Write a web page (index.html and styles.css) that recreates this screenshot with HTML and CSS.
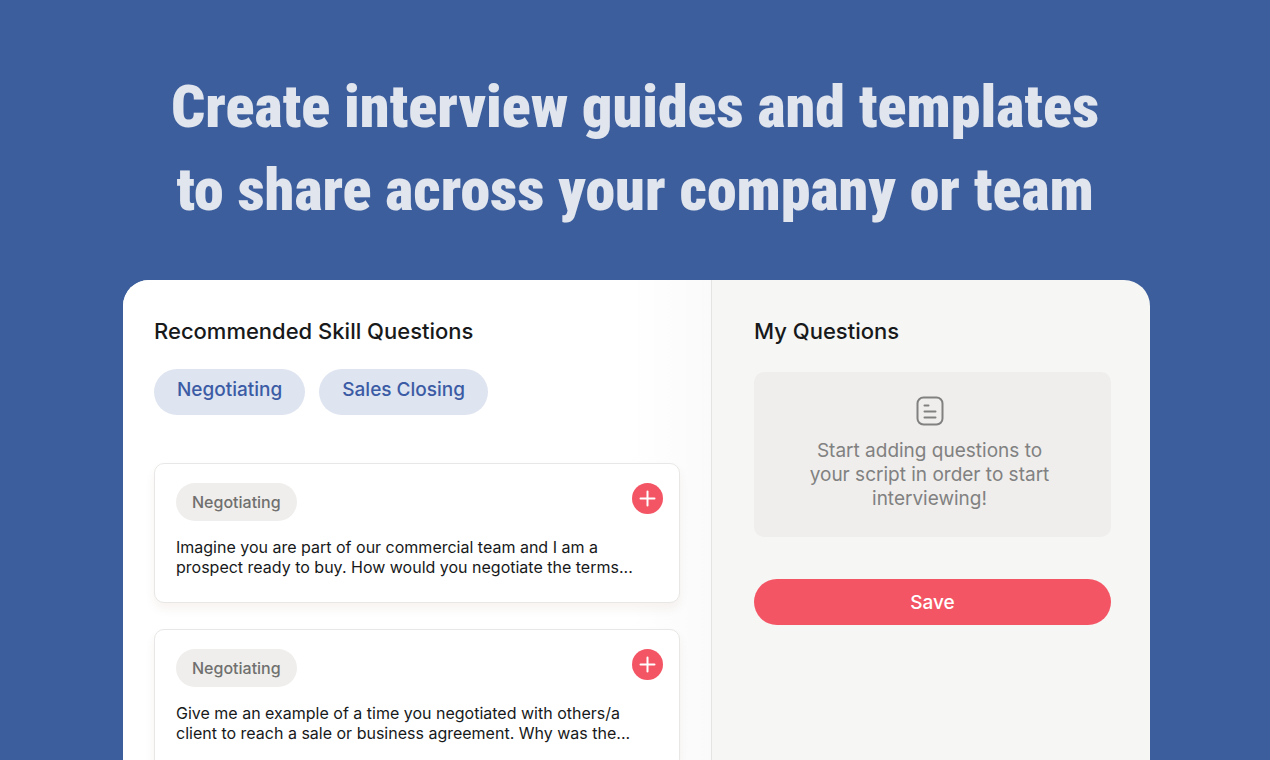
FILE: index.html
```html
<!DOCTYPE html>
<html lang="en">
<head>
    <meta charset="UTF-8">
    <meta name="viewport" content="width=device-width, initial-scale=1.0">
    <title>Interview guides</title>
    <link rel="stylesheet" href="styles.css">
</head>
<body>
    <h1 class="headline">Create interview guides and templates<br>to share across your company or team</h1>
    <main class="panel">
        <section class="recommended">
            <h2>Recommended Skill Questions</h2>
            <div class="skills">
                <button type="button" class="skill">Negotiating</button>
                <button type="button" class="skill">Sales Closing</button>
            </div>
            <div class="questions">
                <article class="question">
                    <div class="question-top">
                        <span class="tag">Negotiating</span>
                        <button type="button" class="add-btn" aria-label="Add question">
                            <svg viewBox="0 0 31 31" width="31" height="31"><path d="M15.500 8.500v14M8.500 15.500h14"/></svg>
                        </button>
                    </div>
                    <p>Imagine you are part of our commercial team and I am a<br>prospect ready to buy. How would you negotiate the terms...</p>
                </article>
                <article class="question">
                    <div class="question-top">
                        <span class="tag">Negotiating</span>
                        <button type="button" class="add-btn" aria-label="Add question">
                            <svg viewBox="0 0 31 31" width="31" height="31"><path d="M15.500 8.500v14M8.500 15.500h14"/></svg>
                        </button>
                    </div>
                    <p>Give me an example of a time you negotiated with others/a<br>client to reach a sale or business agreement. Why was the...</p>
                </article>
            </div>
        </section>
        <section class="mine">
            <h2>My Questions</h2>
            <div class="empty">
                <svg viewBox="0 0 28 30" width="28" height="30">
                    <rect x="1.500" y="1.500" width="25" height="27" rx="6"/>
                    <path d="M8.500 9.500h4M8.500 15.500h11M8.500 21.500h11"/>
                </svg>
                <p>Start adding questions to<br>your script in order to start<br>interviewing!</p>
            </div>
            <button type="button" class="save-btn">Save</button>
        </section>
    </main>
</body>
</html>
```
FILE: styles.css
```css
* {
    margin: 0;
    padding: 0;
    box-sizing: border-box;
}

body {
    height: 100vh;
    overflow: hidden;
    display: flex;
    flex-direction: column;
    background-color: #3c5e9c;
    font-family: Inter, sans-serif;
    color: #17191a;
}

button {
    border: none;
    font-family: inherit;
    cursor: pointer;
}

.headline {
    padding: 65px 20px 49px;
    text-align: center;
    font-family: "Roboto Condensed", Roboto, sans-serif;
    font-size: 60px;
    line-height: 83px;
    font-weight: 900;
    color: #e1e5ee;
    white-space: nowrap;
}

.panel {
    flex: 1;
    min-height: 0;
    margin: 0 120px 0 123px;
    display: grid;
    grid-template-columns: 588fr 439fr;
    border-radius: 26px 26px 0 0;
    overflow: hidden;
    background-color: #f6f6f4;
}

.panel h2 {
    font-size: 22px;
    line-height: 28px;
    font-weight: 500;
}

.recommended {
    padding: 37px 31px 0;
    background: linear-gradient(90deg, #ffffff 86%, #fafafa);
}

.skills {
    display: flex;
    gap: 14px;
    margin-top: 24px;
}

.skill {
    height: 46px;
    padding: 0 23px 6px;
    border-radius: 23px;
    background-color: #dee4f0;
    color: #3b5ba5;
    font-size: 19px;
    font-weight: 500;
}

.questions {
    display: grid;
    gap: 26px;
    margin-top: 48px;
}

.question {
    height: 140px;
    padding: 19px 16px 0 21px;
    border: 1px solid #e8e7e5;
    border-radius: 10px;
    background-color: #ffffff;
    box-shadow: 0 6px 10px rgba(150, 100, 80, 0.08);
}

.question-top {
    display: flex;
    justify-content: space-between;
    align-items: flex-start;
}

.tag {
    padding: 0 16px;
    border-radius: 19px;
    background-color: #efeeec;
    color: #70706f;
    font-size: 16px;
    line-height: 38px;
    font-weight: 500;
}

.add-btn {
    display: flex;
    border-radius: 50%;
    background-color: #f45564;
}

.add-btn svg {
    fill: none;
    stroke: #ffffff;
    stroke-width: 2;
    stroke-linecap: round;
}

.question p {
    margin-top: 16px;
    font-size: 16px;
    line-height: 20px;
    white-space: nowrap;
}

.mine {
    padding: 37px 39px 0 42px;
    border-left: 1px solid #e4e4e3;
}

.empty {
    display: flex;
    flex-direction: column;
    align-items: center;
    margin-top: 27px;
    padding: 24px 24px 26px 18px;
    border-radius: 10px;
    background-color: #efeeec;
    color: #818181;
}

.empty svg {
    fill: none;
    stroke: #818181;
    stroke-width: 2;
    stroke-linecap: round;
}

.empty p {
    margin-top: 13px;
    text-align: center;
    font-size: 19px;
    line-height: 24px;
}

.save-btn {
    width: 100%;
    height: 46px;
    margin-top: 42px;
    border-radius: 23px;
    background-color: #f45564;
    color: #ffffff;
    font-size: 19px;
    font-weight: 500;
}
```
